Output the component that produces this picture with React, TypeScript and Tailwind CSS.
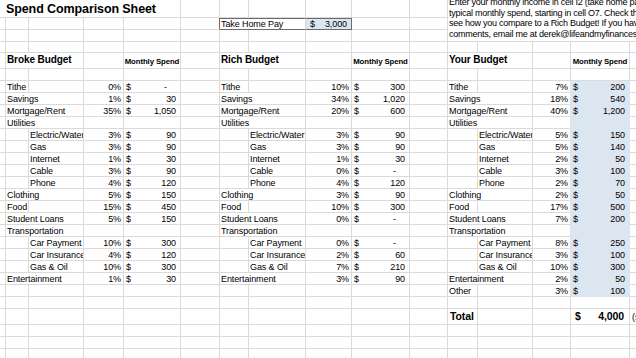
import React from 'react';

type Vals = [string, string?] | null;

// label, indented under a group
const labels: [string, boolean][] = [
  ['Tithe', false],
  ['Savings', false],
  ['Mortgage/Rent', false],
  ['Utilities', false],
  ['Electric/Water', true],
  ['Gas', true],
  ['Internet', true],
  ['Cable', true],
  ['Phone', true],
  ['Clothing', false],
  ['Food', false],
  ['Student Loans', false],
  ['Transportation', false],
  ['Car Payment', true],
  ['Car Insurance', true],
  ['Gas & Oil', true],
  ['Entertainment', false],
  ['Other', false],
];

const broke: Vals[] = [
  ['0%', '-'], ['1%', '30'], ['35%', '1,050'], [''],
  ['3%', '90'], ['3%', '90'], ['1%', '30'], ['3%', '90'], ['4%', '120'],
  ['5%', '150'], ['15%', '450'], ['5%', '150'], [''],
  ['10%', '300'], ['4%', '120'], ['10%', '300'], ['1%', '30'], null,
];

const rich: Vals[] = [
  ['10%', '300'], ['34%', '1,020'], ['20%', '600'], [''],
  ['3%', '90'], ['3%', '90'], ['1%', '30'], ['0%', '-'], ['4%', '120'],
  ['3%', '90'], ['10%', '300'], ['0%', '-'], [''],
  ['0%', '-'], ['2%', '60'], ['7%', '210'], ['3%', '90'], null,
];

const yours: Vals[] = [
  ['7%', '200'], ['18%', '540'], ['40%', '1,200'], [''],
  ['5%', '150'], ['5%', '140'], ['2%', '50'], ['3%', '100'], ['2%', '70'],
  ['2%', '50'], ['17%', '500'], ['7%', '200'], [''],
  ['8%', '250'], ['3%', '100'], ['10%', '300'], ['2%', '50'], ['3%', '100'],
];

const shortLabels = ['Tithe', 'Food', 'Other'];

const GR = 'border-r-[#dadada]';
const GB = 'border-b-[#dadada]';
const BR = 'border-r-[#dce6f1]';
const BB = 'border-b-[#dce6f1]';

const spans = { 1: 'col-span-1', 2: 'col-span-2', 5: 'col-span-5' };

type CellProps = {
  span?: 1 | 2 | 5;
  r?: string;
  b?: string;
  className?: string;
  children?: React.ReactNode;
};

function Cell({ span = 1, r = GR, b = GB, className = '', children }: CellProps) {
  return (
    <div
      className={`${spans[span]} flex min-w-0 items-end overflow-hidden whitespace-nowrap border-r border-b ${r} ${b} ${className}`}
    >
      {children}
    </div>
  );
}

const blanks = (n: number, key: string) =>
  Array.from({ length: n }, (_, i) => <Cell key={`${key}-${i}`} />);

function blockRow(i: number, vals: Vals, blue: boolean, key: string) {
  const [label, sub] = labels[i];
  const out: React.ReactNode[] = [];
  if (!vals) return blanks(4, key);
  if (sub) {
    out.push(<Cell key={`${key}-a`} />);
    out.push(
      <Cell key={`${key}-b`} className="pl-[1px]">
        {label}
      </Cell>
    );
  } else if (shortLabels.includes(label)) {
    out.push(
      <Cell key={`${key}-a`} className="pl-[1px]">
        {label}
      </Cell>
    );
    out.push(<Cell key={`${key}-b`} />);
  } else {
    out.push(
      <Cell key={`${key}-a`} span={2} className="pl-[1px]">
        {label}
      </Cell>
    );
  }
  const [pct, amt] = vals;
  out.push(
    <Cell key={`${key}-c`} r={blue ? BR : GR} className="justify-end pr-[2px]">
      {pct}
    </Cell>
  );
  out.push(
    <Cell
      key={`${key}-d`}
      r={blue ? BR : GR}
      b={blue ? BB : GB}
      className={`justify-between ${blue ? 'bg-[#dce6f1]' : ''}`}
    >
      {amt && (
        <>
          <span className="pl-[2px]">$</span>
          <span className={amt === '-' ? 'pr-[13px]' : 'pr-[4px]'}>{amt}</span>
        </>
      )}
    </Cell>
  );
  return out;
}

function Header({ title }: { title: string }) {
  return (
    <>
      <Cell span={2} className="pl-[1px] pb-[2px] text-[10px] font-bold leading-[12px]">
        {title}
      </Cell>
      <Cell />
      <Cell className="justify-center pb-[2px] text-[7.8px] font-bold leading-[9px]">Monthly Spend</Cell>
    </>
  );
}

export default function App() {
  return (
    <div className="h-[358px] w-[636px] overflow-hidden bg-white font-['Liberation_Sans',Arial,sans-serif] text-[9px] leading-[10px] tracking-[-0.1px] text-black">
      <div className="grid w-[700px] grid-cols-[6px_23px_55px_40px_57px_39px_29px_57px_46px_58px_38px_30px_55px_38px_59px_70px] grid-rows-[18px_12px_12px_11px_16px_12px_repeat(18,12px)_12px_16px_12px_12px_12px]">
        {/* row 1 */}
        <Cell span={5} className="pl-[6px] pb-[1px] text-[12.5px] font-bold leading-[14px] tracking-[-0.1px]">
          Spend Comparison Sheet
        </Cell>
        {blanks(6, 'r1')}
        <div className="col-span-5 row-span-3 flex flex-col justify-end overflow-hidden border-b border-b-[#dadada] pb-[1.4px] pl-[1px] leading-[10.67px] tracking-[-0.25px] whitespace-nowrap">
          <div>Enter your monthly income in cell I2 (take home pay) and your</div>
          <div>typical monthly spend, starting in cell O7. Check the totals to</div>
          <div>see how you compare to a Rich Budget! If you have any questions or</div>
          <div>comments, email me at derek@lifeandmyfinances.com</div>
        </div>

        {/* row 2 */}
        {blanks(5, 'r2')}
        <Cell r="border-r-[#6b6b6b]" />
        <Cell span={2} b="border-b-[#6b6b6b]" className="border-t border-t-[#6b6b6b] pl-[1px]">
          Take Home Pay
        </Cell>
        <Cell
          r="border-r-[#6b6b6b]"
          b="border-b-[#6b6b6b]"
          className="justify-between border-t border-t-[#6b6b6b] bg-[#dce6f1]"
        >
          <span className="pl-[4px]">$</span>
          <span className="pr-[4px]">3,000</span>
        </Cell>
        {blanks(2, 'r2b')}

        {/* row 3, 4 */}
        {blanks(11, 'r3')}
        {blanks(16, 'r4')}

        {/* row 5 headers */}
        <Cell />
        <Header title="Broke Budget" />
        <Cell />
        <Header title="Rich Budget" />
        <Cell />
        <Header title="Your Budget" />
        <Cell />

        {/* row 6 */}
        {blanks(16, 'r6')}

        {/* rows 7-24 */}
        {labels.map((_, i) => (
          <React.Fragment key={i}>
            <Cell />
            {blockRow(i, broke[i], false, `b${i}`)}
            <Cell />
            {blockRow(i, rich[i], false, `r${i}`)}
            <Cell />
            {blockRow(i, yours[i], true, `y${i}`)}
            <Cell />
          </React.Fragment>
        ))}

        {/* row 25 */}
        {blanks(16, 'r25')}

        {/* total */}
        {blanks(11, 'r26')}
        <Cell className="pl-[2px] pb-[2px] text-[10.5px] font-bold leading-[12px]">Total</Cell>
        <Cell />
        <Cell />
        <Cell className="justify-between pb-[2px] text-[10.5px] font-bold leading-[12px]">
          <span className="pl-[4px]">$</span>
          <span className="pr-[5px]">4,000</span>
        </Cell>
        <Cell className="pl-[2px] pb-[2px]">(should equal Take Home Pay)</Cell>

        {blanks(16, 'r27')}
        {blanks(16, 'r28')}
        {blanks(16, 'r29')}
      </div>
    </div>
  );
}
